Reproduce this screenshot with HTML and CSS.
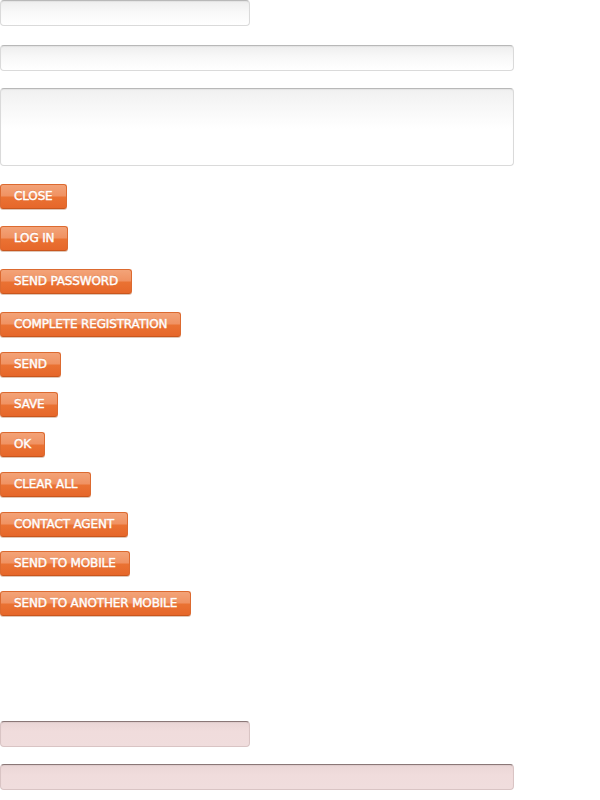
FILE: index.html
```html
<!DOCTYPE html>
<html>
<head>
<meta charset="utf-8">
<link rel="stylesheet" href="styles.css">
</head>
<body>
<div class="page">
  <input class="field field-short" type="text">
  <input class="field field-long" type="text">
  <textarea class="field field-area"></textarea>
  <div class="buttons">
    <button class="btn">CLOSE</button>
    <button class="btn gap17">LOG IN</button>
    <button class="btn gap18">SEND PASSWORD</button>
    <button class="btn gap18">COMPLETE REGISTRATION</button>
    <button class="btn gap15">SEND</button>
    <button class="btn gap15">SAVE</button>
    <button class="btn gap15">OK</button>
    <button class="btn gap15">CLEAR ALL</button>
    <button class="btn gap15">CONTACT AGENT</button>
    <button class="btn gap14">SEND TO MOBILE</button>
    <button class="btn gap15">SEND TO ANOTHER MOBILE</button>
  </div>
  <input class="field field-short error err1" type="text">
  <input class="field field-long error err2" type="text">
</div>
</body>
</html>
```

FILE: styles.css
```css
html, body {
  margin: 0;
  padding: 0;
  background: #ffffff;
}
.page {
  display: flex;
  flex-direction: column;
  align-items: flex-start;
}
.field {
  display: block;
  box-sizing: border-box;
  margin: 0;
  padding: 0;
  height: 26px;
  border: 1px solid #dadada;
  border-top-color: #b8b8b8;
  border-radius: 4px;
  background: linear-gradient(#eeeeee 0%, #f8f8f8 45%, #ffffff 100%);
  box-shadow: inset 0 1px 1px rgba(0, 0, 0, 0.05);
  outline: none;
  resize: none;
  font-family: "DejaVu Sans", sans-serif;
}
.field-short { width: 250px; }
.field-long { width: 514px; margin-top: 19px; }
.field-area {
  width: 514px;
  height: 78px;
  margin-top: 17px;
  background: linear-gradient(#f0f0f0 0px, #f6f6f6 14px, #ffffff 40px, #ffffff 100%);
}
.buttons {
  display: flex;
  flex-direction: column;
  align-items: flex-start;
  margin-top: 18px;
}
.btn {
  box-sizing: border-box;
  height: 25px;
  margin: 0;
  padding: 0 13px 1px 13px;
  border: 1px solid #dc6a30;
  border-bottom-color: #c9561d;
  border-radius: 3px;
  background: linear-gradient(#f3a378 0%, #f09262 48%, #ea7233 52%, #e6672a 100%);
  box-shadow: 0 1px 0 rgba(150, 70, 20, 0.3);
  color: #ffffff;
  font-family: "DejaVu Sans", Verdana, sans-serif;
  font-weight: normal;
  font-size: 12px;
  letter-spacing: -0.15px;
  -webkit-text-stroke: 0.4px #ffffff;
  line-height: 22px;
  white-space: nowrap;
  cursor: pointer;
  text-shadow: 0 -1px 0 rgba(190, 80, 25, 0.3);
}
.gap14 { margin-top: 14px; }
.gap15 { margin-top: 15px; }
.gap17 { margin-top: 17px; }
.gap18 { margin-top: 18px; }
.err1 {
  margin-top: 105px;
}
.error {
  background: linear-gradient(#ead6d6 0%, #f0dcdc 40%, #f0dddd 100%);
  border-color: #d9c4c4;
  border-top-color: #8a7777;
}
.err2 { margin-top: 17px; }
```
